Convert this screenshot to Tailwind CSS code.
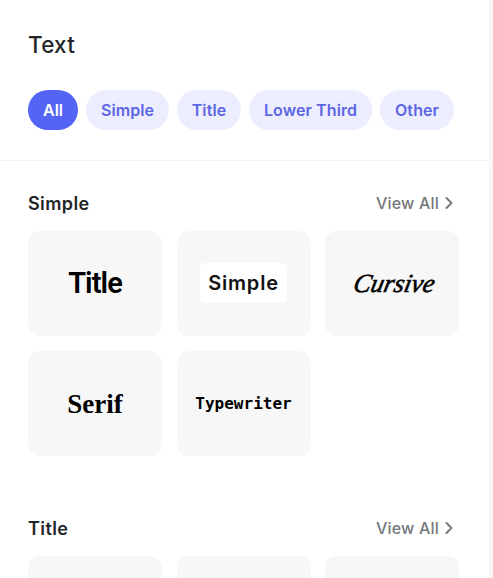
<!DOCTYPE html>
<html lang="en">

<head>
    <meta charset="UTF-8">
    <meta name="viewport" content="width=device-width, initial-scale=1.0">
    <title>Text</title>
    <script src="https://cdn.jsdelivr.net/npm/@tailwindcss/browser@4"></script>
</head>

<body class="flex h-screen overflow-hidden bg-[#f7f7f8] font-['Inter',sans-serif] text-[#242529]">
    <!-- Text panel -->
    <main class="h-screen w-[489px] shrink-0 overflow-hidden bg-white">
        <header class="h-[161px] border-b border-[#f3f3f4] pl-7 pt-[29px]">
            <h1 class="text-[22.5px] leading-8 font-medium tracking-[0.2px]">Text</h1>
            <nav class="mt-[29px] flex gap-2 text-base font-semibold text-[#5d66e3]">
                <button class="h-10 w-[50px] rounded-full bg-[#5465f5] text-white">All</button>
                <button class="h-10 w-[83px] rounded-full bg-[#ecedff] tracking-[0.1px]">Simple</button>
                <button class="h-10 w-16 rounded-full bg-[#ecedff] tracking-[0.1px]">Title</button>
                <button class="h-10 w-[123px] rounded-full bg-[#ecedff] tracking-[0.1px]">Lower Third</button>
                <button class="h-10 w-[74px] rounded-full bg-[#ecedff] tracking-[0.1px]">Other</button>
            </nav>
        </header>

        <!-- Simple -->
        <section class="h-[325px] pl-7 pt-[31px]">
            <div class="flex h-6 w-[429px] items-center justify-between">
                <h2 class="text-lg font-semibold tracking-[0.4px]">Simple</h2>
                <a class="flex items-center gap-0.5 pb-0.5 text-base font-medium tracking-[0.2px] text-[#75777c]">
                    View All
                    <svg class="size-4" viewBox="0 0 16 16" fill="none" stroke="currentColor" stroke-width="2" stroke-linecap="round" stroke-linejoin="round">
                        <path d="M5.5 3l5 5-5 5" />
                    </svg>
                </a>
            </div>
            <div class="mt-[15px] grid w-[431px] grid-cols-3 gap-x-[14.5px] gap-y-[15px] text-black">
                <div class="flex h-[105px] items-center justify-center rounded-xl bg-[#f7f7f7]">
                    <span class="font-['Roboto',sans-serif] text-[29px] font-semibold tracking-[-0.9px]">Title</span>
                </div>
                <div class="flex h-[105px] items-center justify-center rounded-xl bg-[#f7f7f7] pb-0.5">
                    <span class="flex h-10 w-[87px] items-center justify-center rounded-[5px] bg-white text-xl font-semibold tracking-[0.8px] text-[#111]">Simple</span>
                </div>
                <div class="flex h-[105px] items-center justify-center rounded-xl bg-[#f7f7f7]">
                    <span class="-skew-x-12 pl-1 font-['Liberation_Serif',cursive] text-[26px] italic [-webkit-text-stroke:0.6px_black]">Cursive</span>
                </div>
                <div class="flex h-[105px] items-center justify-center rounded-xl bg-[#f7f7f7]">
                    <span class="pt-0.5 font-['Liberation_Serif',serif] text-[27px] font-bold">Serif</span>
                </div>
                <div class="flex h-[105px] items-center justify-center rounded-xl bg-[#f7f7f7]">
                    <span class="pt-px font-['DejaVu_Sans_Mono',monospace] text-base font-bold">Typewriter</span>
                </div>
            </div>
        </section>

        <!-- Title -->
        <section class="pl-7 pt-[31px]">
            <div class="flex h-6 w-[429px] items-center justify-between">
                <h2 class="text-lg font-semibold tracking-[0.4px]">Title</h2>
                <a class="flex items-center gap-0.5 pb-0.5 text-base font-medium tracking-[0.2px] text-[#75777c]">
                    View All
                    <svg class="size-4" viewBox="0 0 16 16" fill="none" stroke="currentColor" stroke-width="2" stroke-linecap="round" stroke-linejoin="round">
                        <path d="M5.5 3l5 5-5 5" />
                    </svg>
                </a>
            </div>
            <div class="mt-[15px] grid w-[431px] grid-cols-3 gap-x-[14.5px]">
                <div class="h-6 rounded-t-xl bg-[#f7f7f7]"></div>
                <div class="h-6 rounded-t-xl bg-[#f7f7f7]"></div>
                <div class="h-6 rounded-t-xl bg-[#f7f7f7]"></div>
            </div>
        </section>
    </main>
</body>

</html>
